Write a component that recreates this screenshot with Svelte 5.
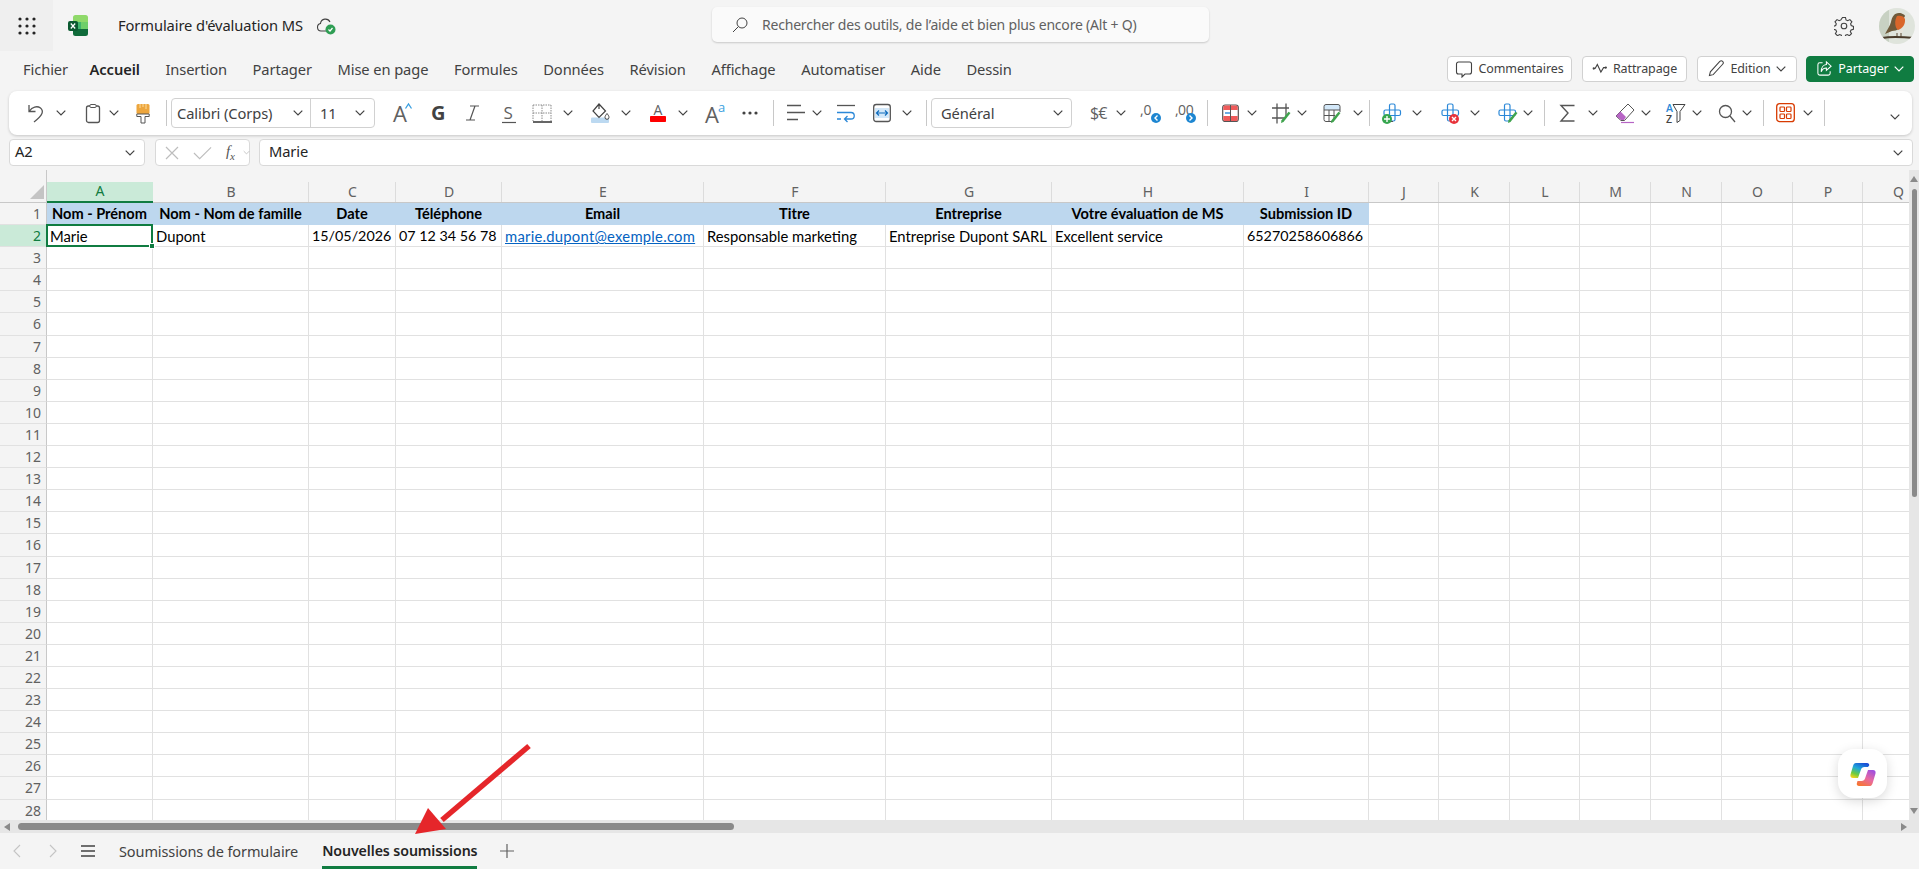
<script>
const tabs = ['Fichier', 'Accueil', 'Insertion', 'Partager', 'Mise en page', 'Formules', 'Données', 'Révision', 'Affichage', 'Automatiser', 'Aide', 'Dessin'];

// [icon, page x, width] : the gap before each item comes from the x of the previous one
const tools = [
	['undo', 28, 16], ['chev', 56, 10], ['clip', 85, 16], ['chev', 109, 10], ['brush', 136, 14], ['sep', 166, 1],
	['font', 171, 204], ['grow', 393, 19], ['bold', 431, 14], ['ital', 465, 15], ['strike', 502, 14], ['border', 532, 20],
	['chev', 563, 10], ['fill', 591, 19], ['chev', 621, 10], ['color', 649, 18], ['chev', 678, 10], ['super', 705, 20],
	['more', 741, 18], ['sep', 773, 1], ['align', 787, 18], ['chev', 812, 10], ['wrap', 837, 18], ['merge', 873, 18],
	['chev', 902, 10], ['sep', 926, 1], ['general', 931, 141], ['money', 1090, 19], ['chev', 1116, 10], ['dec', 1140, 21],
	['inc', 1175, 21], ['sep', 1207, 1], ['cond', 1222, 17], ['chev', 1247, 10], ['hash', 1272, 19], ['chev', 1297, 10],
	['tab', 1323, 18], ['chev', 1353, 10], ['sep', 1369, 1], ['add', 1382, 20], ['chev', 1412, 10], ['del', 1440, 20],
	['chev', 1470, 10], ['fmt', 1498, 19], ['chev', 1523, 10], ['sep', 1544, 1], ['sum', 1560, 15], ['chev', 1588, 10],
	['erase', 1615, 20], ['chev', 1641, 10], ['sort', 1666, 19], ['chev', 1692, 10], ['find', 1718, 17], ['chev', 1742, 10],
	['sep', 1763, 1], ['addin', 1776, 19], ['chev', 1803, 10], ['sep', 1824, 1]
].map((t, i, all) => {
	const prev = i ? all[i - 1][1] + all[i - 1][2] : 9;
	return { icon: t[0], w: t[2], gap: t[1] - prev };
});

const letters = 'ABCDEFGHIJKLMNOPQ'.split('');
const head = ['Nom - Prénom', 'Nom - Nom de famille', 'Date', 'Téléphone', 'Email', 'Titre', 'Entreprise', 'Votre évaluation de MS', 'Submission ID'];
const first = ['Marie', 'Dupont', '15/05/2026', '07 12 34 56 78', 'marie.dupont@exemple.com', 'Responsable marketing', 'Entreprise Dupont SARL', 'Excellent service', '65270258606866'];
const numeric = [2, 3, 8];
const rows = Array.from({ length: 28 }, (_, i) => i + 1);
</script>

{#snippet chevron(color = '#424242')}
	<svg class="chev" viewBox="0 0 10 6" width="10" height="6"><path d="M.7.7 5 5 9.3.7" fill="none" stroke={color} stroke-width="1.2" /></svg>
{/snippet}

{#snippet cross()}
	<path d="M7.5 9V4.500A1.500 1.500 0 0 1 9 3h2.500A1.500 1.500 0 0 1 13 4.500V9h4a1.500 1.500 0 0 1 1.500 1.500V13a1.500 1.500 0 0 1-1.500 1.500h-4v4a1.500 1.500 0 0 1-1.500 1.500H9a1.500 1.500 0 0 1-1.500-1.500v-4h-4A1.500 1.500 0 0 1 2 13v-2.500A1.500 1.500 0 0 1 3.500 9zM7.500 9H13v5.500H7.500z" fill="#fff" stroke="#2b88d8" stroke-width="1.200" />
{/snippet}

{#snippet pencil()}
	<path d="M18.500 12 11.500 21l-2.500 1 .5-2.800 7-8.400z" fill="#3fa34d" />
{/snippet}

{#snippet tool(name, w)}
	<svg viewBox="0 0 {w} 24" width={w} height="24" class="ico">
		{#if name === 'undo'}
			<path d="M1 4v6.500h6.500M1.500 10C4 6 9 4.500 12.500 7c3.500 3 2.500 7-6.500 14" fill="none" stroke="#555" stroke-width="1.300" />
		{:else if name === 'clip'}
			<rect x="1.500" y="5" width="13" height="16.500" rx="2" fill="none" stroke="#555" stroke-width="1.300" />
			<rect x="5" y="3.500" width="6" height="3" rx=".8" fill="#fff" stroke="#555" />
		{:else if name === 'brush'}
			<rect x=".5" y="3" width="13" height="10" rx="1.500" fill="#eda63d" />
			<path d="M4 3v4M7 3v3M10 3v5" stroke="#f8d089" stroke-width="1.300" />
			<path d="M.8 13h12.400v2.500H9V22H5v-6.500H.8z" fill="#fff" stroke="#555" />
		{:else if name === 'grow'}
			<text x="0" y="21" class="t thin" font-size="22">A</text>
			<path d="M12.500 7.500 15.500 3 18.500 7.500" fill="none" stroke="#3a9fe0" stroke-width="1.300" />
		{:else if name === 'bold'}
			<text x="0" y="19" class="t" font-size="20" font-weight="700" fill="#424242">G</text>
		{:else if name === 'ital'}
			<path d="M5 5h9M10 5 5 19M1 19h9" fill="none" stroke="#555" stroke-width="1.200" />
		{:else if name === 'strike'}
			<text x="1.500" y="18" class="t thin" font-size="17">S</text>
			<path d="M0 21.500h14" stroke="#555" stroke-width="1.200" />
		{:else if name === 'border'}
			<path d="M1 4h18M1 12h18M1 4v16M10 4v16M19 4v16" fill="none" stroke="#8a8a8a" stroke-dasharray="1.500 1" />
			<path d="M1 21h19" stroke="#333" stroke-width="1.500" />
		{:else if name === 'fill'}
			<rect x="0" y="16.500" width="18" height="5.500" rx="1" fill="#bcd9f1" />
			<path d="M8 3 2 10l6 6.500 6.500-6.500zM8 3v5" fill="none" stroke="#424242" stroke-width="1.200" />
			<path d="M16 12.500c-1.500 2-2 2.800-2 3.800a2 2 0 0 0 4 0c0-1-.5-1.800-2-3.800z" fill="#fff" stroke="#424242" />
		{:else if name === 'color'}
			<text x="9" y="14" class="t thin" font-size="14" text-anchor="middle">A</text>
			<rect x="1" y="15" width="16" height="6" rx=".8" fill="#f00" />
		{:else if name === 'super'}
			<text x="0" y="22" class="t thin" font-size="22">A</text>
			<text x="13" y="11" class="t" font-size="13" fill="#3a9fe0">a</text>
		{:else if name === 'more'}
			<g fill="#424242"><circle cx="3" cy="12" r="1.600" /><circle cx="9" cy="12" r="1.600" /><circle cx="15" cy="12" r="1.600" /></g>
		{:else if name === 'align'}
			<path d="M0 4.500h14M0 11.500h18M0 18.500h11" stroke="#555" stroke-width="1.300" />
		{:else if name === 'wrap'}
			<path d="M0 4.500h18" stroke="#555" stroke-width="1.300" />
			<path d="M0 11.500h14a3 3 0 0 1 0 6.500H8M10.500 15 7.500 18l3 3M0 18h4" fill="none" stroke="#2b88d8" stroke-width="1.300" />
		{:else if name === 'merge'}
			<rect x=".7" y="3.500" width="16.600" height="17" rx="2.500" fill="#fff" stroke="#555" stroke-width="1.300" />
			<rect x="2" y="7" width="14" height="10" fill="#d3e8f9" />
			<path d="M4 12h10M6 9.500 3.500 12 6 14.500M12 9.500 14.500 12 12 14.500" fill="none" stroke="#0f6cbd" stroke-width="1.200" />
		{:else if name === 'money'}
			<text x="0" y="18" class="t thin" font-size="16" letter-spacing="-1">$€</text>
		{:else if name === 'dec'}
			<text x="0" y="14" class="t thin" font-size="14">,0</text>
			<circle cx="16" cy="17" r="5" fill="#1d86d1" />
			<path d="M17.500 14.500 15 17l2.500 2.500" fill="none" stroke="#fff" stroke-width="1.400" />
		{:else if name === 'inc'}
			<text x="0" y="14" class="t thin" font-size="14" letter-spacing="-.5">,00</text>
			<circle cx="16" cy="17" r="5" fill="#1d86d1" />
			<path d="M14.500 14.500 17 17l-2.500 2.500" fill="none" stroke="#fff" stroke-width="1.400" />
		{:else if name === 'cond'}
			<rect x=".7" y="4" width="15.600" height="16.500" rx="2.500" fill="#fff" stroke="#555" stroke-width="1.200" />
			<path d="M1.300 9V6a1.500 1.500 0 0 1 1.500-1.500h11.400A1.500 1.500 0 0 1 15.700 6v3zM1.300 15v3.500A1.500 1.500 0 0 0 2.800 20h11.400a1.500 1.500 0 0 0 1.500-1.500V15z" fill="#ee5b5b" />
			<path d="M3 12h5" stroke="#2b88d8" stroke-width="1.400" />
			<path d="M8.500 4v16" stroke="#555" />
		{:else if name === 'hash'}
			<path d="M0 7h17M0 17h12M5 2.500v20M14 2.500v13" fill="none" stroke="#555" stroke-width="1.300" />
			{@render pencil()}
		{:else if name === 'tab'}
			<path d="M1 9V5.500A2 2 0 0 1 3 3.500h12a2 2 0 0 1 2 2V9z" fill="#d3e8f9" stroke="#555" />
			<path d="M1 9v9.500a2 2 0 0 0 2 2h7M1 14.500h11M6 9v11.500M11 9v9M17 9v2" fill="none" stroke="#555" />
			<g transform="translate(-1)">{@render pencil()}</g>
		{:else if name === 'add'}
			{@render cross()}
			<path d="M7.500 14.500V19a1.500 1.500 0 0 0 1.500 1.500h2" fill="none" stroke="#555" />
			<circle cx="5" cy="18" r="5" fill="#36a64f" />
			<path d="M5 15v6M2 18h6" stroke="#fff" stroke-width="1.400" />
		{:else if name === 'del'}
			{@render cross()}
			<circle cx="14" cy="18" r="5" fill="#e8333b" />
			<path d="M12 16l4 4M16 16l-4 4" stroke="#fff" stroke-width="1.400" />
		{:else if name === 'fmt'}
			<g transform="translate(-1)">{@render cross()}</g>
			<g transform="translate(1)">{@render pencil()}</g>
		{:else if name === 'sum'}
			<path d="M14.500 4.500H1L8 12 1 20h13.500" fill="none" stroke="#555" stroke-width="1.400" />
		{:else if name === 'erase'}
			<path d="M13 3 19 9 9.500 19.500H6L1 15z" fill="#fff" stroke="#555" />
			<path d="M5.500 10.500 11 16l-2 3H6L1 15z" fill="#b765c5" />
			<path d="M6 21.500h13" stroke="#b765c5" stroke-width="1.200" />
		{:else if name === 'sort'}
			<text x="0" y="11" class="t" font-size="10.500" font-weight="600" fill="#2b88d8">A</text>
			<text x="0" y="22" class="t" font-size="10.500" font-weight="600" fill="#424242">Z</text>
			<path d="M7 3.500h12l-5 7v9l-3 2v-11z" fill="#fff" stroke="#424242" />
		{:else if name === 'find'}
			<circle cx="7.500" cy="10.500" r="6" fill="none" stroke="#555" stroke-width="1.300" />
			<path d="m12 15 5 6" stroke="#555" stroke-width="1.300" />
		{:else if name === 'addin'}
			<rect x=".7" y="2.700" width="17.600" height="18" rx="3" fill="#fff" stroke="#d83b01" stroke-width="1.300" />
			<g fill="none" stroke="#d83b01" stroke-width="1.200"><rect x="4" y="6" width="4.500" height="4.500" rx=".8" /><rect x="10.500" y="6" width="4.500" height="4.500" rx=".8" /><rect x="4" y="13" width="4.500" height="4.500" rx=".8" /><rect x="10.500" y="13" width="4.500" height="4.500" rx=".8" /></g>
		{/if}
	</svg>
{/snippet}

<div class="app">
	<header class="top">
		<button class="apps" aria-label="Applications">
			<svg viewBox="0 0 18 18" width="18" height="18"><g fill="#242424">
				{#each [2, 9, 16] as y}{#each [2, 9, 16] as x}<circle cx={x} cy={y} r="1.600" />{/each}{/each}
			</g></svg>
		</button>
		<svg class="xl" viewBox="0 0 20 21" width="20" height="21">
			<path d="M5 2.500A2.500 2.500 0 0 1 7.500 0H17.500A2.500 2.500 0 0 1 20 2.500V7H5z" fill="#8fd96a" />
			<rect x="5" y="7" width="8" height="7" fill="#3fb56d" />
			<rect x="13" y="7" width="7" height="7" fill="#6fcf6a" />
			<path d="M5 14h15v4.500a2.500 2.500 0 0 1-2.500 2.500h-10A2.500 2.500 0 0 1 5 18.500z" fill="#0f6b3a" />
			<rect x="0" y="6" width="10" height="10" rx="2" fill="#0b5a31" />
			<path d="M2.800 8.500 7.200 13.500M7.200 8.500 2.800 13.500" stroke="#fff" stroke-width="1.200" />
		</svg>
		<span class="title">Formulaire d'évaluation MS</span>
		<svg class="cloud" viewBox="0 0 20 18" width="20" height="18">
			<path d="M11 14H5a3.800 3.800 0 0 1-.5-7.500A5 5 0 0 1 14 5" fill="none" stroke="#424242" stroke-width="1.100" />
			<circle cx="14.500" cy="12.500" r="5" fill="#2f9e54" />
			<path d="m12.500 12.500 1.500 1.500 2.500-3" fill="none" stroke="#fff" stroke-width="1.200" />
		</svg>
		<div class="search">
			<svg viewBox="0 0 16 16" width="16" height="16"><circle cx="10" cy="6" r="5" fill="none" stroke="#424242" /><path d="M6.400 9.600 1 15" stroke="#424242" /></svg>
			<span>Rechercher des outils, de l’aide et bien plus encore (Alt + Q)</span>
		</div>
		<svg class="gear" viewBox="0 0 20 20" width="20" height="20" fill="none" stroke="#424242" stroke-width="1.100">
			<circle cx="10" cy="10" r="2.800" />
			<path d="M8.500 1.500h3l.5 2.400 1.700.8 2.200-1.100 2 2.200-1.300 2 .6 1.700 2.300.9-.1 2.900-2.300.6-.8 1.700 1.200 2.100-2.100 2-2.100-1.200-1.700.7-.7 2.300h-3l-.6-2.300-1.700-.7-2.100 1.200-2.100-2 1.200-2.100-.8-1.700-2.300-.6-.1-2.900 2.300-.9.600-1.700-1.300-2 2-2.200 2.200 1.100 1.700-.8z" />
		</svg>
		<svg class="avatar" viewBox="0 0 36 36" width="36" height="36">
			<defs><clipPath id="round"><circle cx="18" cy="18" r="18" /></clipPath></defs>
			<g clip-path="url(#round)">
				<rect width="36" height="36" fill="#dfe4dc" />
				<rect y="0" width="10" height="36" fill="#b9c4b2" opacity=".6" />
				<path d="M20 5c-5 0-7 4-8 9-1 4-4 8-6 12l7-3c5 0 10-3 11-9 .5-4 2-6 2-6 0-1-3-3-6-3z" fill="#6f5a3a" />
				<path d="M18 8c3-1 7 0 8 3 .5 5-2 9-7 11-3-2-4-9-1-14z" fill="#d9662a" />
				<path d="M19 22c3 2 6-1 6-5l-1 7-5 2z" fill="#e8e4da" />
				<path d="M18 25v4M22 25v4" stroke="#5a4630" />
				<path d="M3 30c10-2 22-1 33 0" stroke="#4a3b2a" stroke-width="2" fill="none" />
			</g>
		</svg>
	</header>

	<nav class="tabs">
		{#each tabs as t}
			<span class="tab" class:on={t === 'Accueil'}>{t}</span>
		{/each}
		<div class="actions">
			<button class="comments">
				<svg viewBox="0 0 18 18" width="18" height="18"><path d="M3.500 2h11A2 2 0 0 1 16.500 4v8a2 2 0 0 1-2 2H10l-3 3v-3H3.500a2 2 0 0 1-2-2V4a2 2 0 0 1 2-2z" fill="none" stroke="#424242" stroke-width="1.100" /></svg>
				Commentaires
			</button>
			<button class="catchup">
				<svg viewBox="0 0 18 12" width="16" height="11"><path d="M2 6h1.500L6 1.500 10 10 13 5h3" fill="none" stroke="#424242" stroke-width="1.200" /><circle cx="2" cy="6" r="1.300" fill="#424242" /><circle cx="15.500" cy="5" r="1.300" fill="#424242" /></svg>
				Rattrapage
			</button>
			<button class="edit">
				<svg viewBox="0 0 18 18" width="17" height="17"><path d="M12.500 1.500a2 2 0 0 1 3 3L5.500 15.500l-4 1 1-4z" fill="none" stroke="#424242" stroke-width="1.100" /></svg>
				Edition
				{@render chevron()}
			</button>
			<button class="share">
				<svg viewBox="0 0 18 18" width="17" height="17"><path d="M7 3H4a2 2 0 0 0-2 2v9a2 2 0 0 0 2 2h9a2 2 0 0 0 2-2v-2M11 2l5 4.500L11 11V8.500C8 8.500 6.500 10 5.500 12.500 5.500 8 8 5 11 4.800z" fill="none" stroke="#fff" stroke-width="1.100" /></svg>
				Partager
				{@render chevron('#fff')}
			</button>
		</div>
	</nav>

	<section class="ribbon">
		{#each tools as t}
			{#if t.icon === 'chev'}
				<span class="slot" style:margin-left="{t.gap}px" style:width="{t.w}px">{@render chevron()}</span>
			{:else if t.icon === 'sep'}
				<span class="sep" style:margin-left="{t.gap}px"></span>
			{:else if t.icon === 'font'}
				<div class="field two" style:margin-left="{t.gap}px" style:width="{t.w}px">
					<div class="fname"><span>Calibri (Corps)</span>{@render chevron()}</div>
					<div class="fsize"><span>11</span>{@render chevron()}</div>
				</div>
			{:else if t.icon === 'general'}
				<div class="field fmtbox" style:margin-left="{t.gap}px" style:width="{t.w}px"><span>Général</span>{@render chevron()}</div>
			{:else}
				<span class="slot" style:margin-left="{t.gap}px" style:width="{t.w}px">{@render tool(t.icon, t.w)}</span>
			{/if}
		{/each}
		<span class="collapse">{@render chevron()}</span>
	</section>

	<section class="formula">
		<div class="box namebox"><span>A2</span>{@render chevron()}</div>
		<div class="box fxbox">
			<svg viewBox="0 0 14 14" width="14" height="14"><path d="M1 1l12 12M13 1 1 13" stroke="#bdbdbd" stroke-width="1.200" /></svg>
			<svg viewBox="0 0 20 14" width="19" height="14"><path d="M1 7l6 6L19 1" fill="none" stroke="#bdbdbd" stroke-width="1.200" /></svg>
			<em class="fx">f<sub>x</sub></em>
			<svg viewBox="0 0 10 6" width="7" height="5"><path d="M1 1l4 4 4-4" fill="none" stroke="#bdbdbd" stroke-width="1.200" /></svg>
		</div>
		<div class="box input"><span>Marie</span>{@render chevron()}</div>
	</section>

	<main class="sheet">
		<div class="grid-wrap">
			<div class="grid">
				<div class="corner"><i></i></div>
				{#each letters as l, i}
					<div class="col" class:sel={i === 0}>{l}</div>
				{/each}
				{#each rows as r}
					<div class="rowh" class:sel={r === 2}>{r}</div>
					{#each letters as _, c}
						{#if r === 1 && c < head.length}
							<div class="cell h">{head[c]}</div>
						{:else if r === 2 && c < first.length}
							<div class="cell" class:cur={c === 0} class:num={numeric.includes(c)}>
								{#if c === 4}<span class="link">{first[c]}</span>{:else}{first[c]}{/if}
							</div>
						{:else}
							<div class="cell"></div>
						{/if}
					{/each}
				{/each}
			</div>
			<div class="vbar">
				<i class="up"></i>
				<b></b>
				<i class="down"></i>
			</div>
		</div>
		<div class="hbar">
			<i class="left"></i>
			<b></b>
			<i class="right"></i>
		</div>
	</main>

	<footer class="sheets">
		<svg class="nav" viewBox="0 0 8 14" width="8" height="14"><path d="M7 1 1 7l6 6" fill="none" stroke="#c4c4c4" stroke-width="1.100" /></svg>
		<svg class="nav next" viewBox="0 0 8 14" width="8" height="14"><path d="M1 1l6 6-6 6" fill="none" stroke="#c4c4c4" stroke-width="1.100" /></svg>
		<svg class="menu" viewBox="0 0 14 12" width="14" height="12"><path d="M0 1h14M0 6h14M0 11h14" stroke="#424242" stroke-width="1.300" /></svg>
		<span class="sheet-tab">Soumissions de formulaire</span>
		<span class="sheet-tab on">Nouvelles soumissions</span>
		<svg class="plus" viewBox="0 0 14 14" width="14" height="14"><path d="M7 0v14M0 7h14" stroke="#616161" stroke-width="1.200" /></svg>
	</footer>

	<div class="copilot">
		<svg viewBox="0 0 26 24" width="26" height="24">
			<defs>
				<linearGradient id="cpa" x1="0.700" y1="0" x2="0.200" y2="1"><stop offset="0" stop-color="#1b4fd6" /><stop offset=".4" stop-color="#1fa8d8" /><stop offset=".75" stop-color="#6ccb3f" /><stop offset="1" stop-color="#f2d21b" /></linearGradient>
				<linearGradient id="cpb" x1="0.800" y1="0" x2="0.200" y2="1"><stop offset="0" stop-color="#a04fe0" /><stop offset=".5" stop-color="#e86aa0" /><stop offset="1" stop-color="#f7762f" /></linearGradient>
			</defs>
			<path d="M6 1h11c1.500 0 2.500 1 2.200 2.500L18 5h-3.500c-2 0-3 1-3.500 2.500L8 16H3c-2 0-3-1.500-2.500-3.500L3 4c.5-2 1.500-3 3-3z" fill="url(#cpa)" />
			<path d="M20 24H9c-1.500 0-2.500-1-2.200-2.500L7.500 19h4c2 0 3-1 3.500-2.500L18 8h5c2 0 3 1.500 2.500 3.500L23 20c-.5 2-1.500 4-3 4z" fill="url(#cpb)" />
		</svg>
	</div>

	<svg class="pointer" viewBox="0 0 130 100" width="130" height="100">
		<path d="M114 6 27 80" stroke="#e5262a" stroke-width="5.500" />
		<path d="M0 94 13 68 31 89z" fill="#e5262a" />
	</svg>
</div>

<style>
:global(body) {
	margin: 0;
	background: #f4f4f4;
}
.app {
	position: relative;
	display: flex;
	flex-direction: column;
	height: 869px;
	overflow: hidden;
	font-family: "Noto Sans", "Open Sans", sans-serif;
	color: #424242;
	font-size: 14.7px;
	letter-spacing: -0.1px;
}
.app :global(svg) {
	display: block;
	flex: none;
}
.app :global(svg.ico) {
	overflow: visible;
}
button {
	font: inherit;
	color: inherit;
}
.t {
	font-family: "Open Sans", sans-serif;
}
.thin {
	font-weight: 400;
	fill: #616161;
}
.top {
	display: flex;
	align-items: center;
	height: 51px;
	flex: none;
}
.apps {
	width: 53px;
	height: 51px;
	border: 0;
	background: #efefef;
	display: grid;
	place-items: center;
	padding: 0;
}
.xl {
	margin-left: 15px;
}
.title {
	margin-left: 30px;
	margin-top: -1px;
	color: #242424;
}
.cloud {
	margin-left: 13px;
}
.search {
	position: absolute;
	left: 712px;
	top: 7px;
	width: 497px;
	height: 35px;
	box-sizing: border-box;
	background: #fafafa;
	border-radius: 5px;
	box-shadow: 0 1px 2px #0000002e;
	display: flex;
	align-items: center;
	padding-left: 20px;
	gap: 14px;
	color: #616161;
	font-size: 14px;
	letter-spacing: -0.2px;
}
.gear {
	margin-left: auto;
}
.avatar {
	margin: 0 4px 0 25px;
}
.tabs {
	display: flex;
	align-items: center;
	height: 35px;
	flex: none;
	padding-left: 23px;
	gap: 25.6px;
}
.tab.on {
	font-weight: 600;
	color: #242424;
	margin-left: -4px;
}
.actions {
	margin-left: auto;
	margin-right: 5px;
	display: flex;
	gap: 10px;
}
.actions button {
	height: 26px;
	box-sizing: border-box;
	background: #fff;
	border: 1px solid #d1d1d1;
	border-radius: 4px;
	display: flex;
	align-items: center;
	justify-content: center;
	gap: 5px;
	padding: 0;
	font-size: 12.5px;
	color: #424242;
	letter-spacing: -0.1px;
}
.comments {
	width: 125px;
}
.catchup {
	width: 105px;
}
.edit {
	width: 100px;
}
.actions .share {
	width: 108px;
	margin-left: -1px;
	background: #107c41;
	border-color: #107c41;
	color: #fff;
}
.ribbon {
	display: flex;
	align-items: center;
	flex: none;
	height: 44px;
	margin: 5px 7px 0 9px;
	background: #fff;
	border-radius: 8px;
	box-shadow: 0 1px 3px #00000030;
}
.slot {
	display: flex;
	align-items: center;
	justify-content: center;
	flex: none;
}
.sep {
	width: 1px;
	height: 26px;
	background: #c8c8c8;
	flex: none;
}
.field {
	height: 30px;
	box-sizing: border-box;
	border: 1px solid #d1d1d1;
	border-radius: 4px;
	display: flex;
	align-items: center;
	flex: none;
	color: #424242;
}
.two .fname {
	width: 139px;
	height: 100%;
	display: flex;
	align-items: center;
	justify-content: space-between;
	padding: 0 7px 0 5px;
	box-sizing: border-box;
	border-right: 1px solid #d1d1d1;
}
.two .fsize {
	flex: 1;
	display: flex;
	align-items: center;
	justify-content: space-between;
	padding: 0 9px 0 9px;
}
.fmtbox {
	justify-content: space-between;
	padding: 0 8px 0 9px;
}
.collapse {
	margin-left: auto;
	margin-right: 12px;
	margin-top: 8px;
}
.formula {
	display: flex;
	flex: none;
	height: 27px;
	margin: 4px 6px 0 9px;
	gap: 9px;
}
.box {
	background: #fff;
	border: 1px solid #d9d9d9;
	border-radius: 4px;
	box-sizing: border-box;
	display: flex;
	align-items: center;
	height: 27px;
}
.box > span {
	margin-top: -4px;
}
.namebox {
	width: 136px;
	justify-content: space-between;
	padding: 0 9px 0 5px;
	color: #242424;
}
.fxbox {
	width: 95px;
	margin-left: 1px;
	padding-left: 9px;
	gap: 14px;
}
.fx {
	font-family: "Liberation Serif", serif;
	font-size: 15px;
	color: #555;
	margin-right: -6px;
}
.fx sub {
	font-size: 11px;
}
.input {
	flex: 1;
	justify-content: space-between;
	padding: 0 9px;
	color: #242424;
}
.sheet {
	flex: 1;
	min-height: 0;
	display: flex;
	flex-direction: column;
	margin-top: 4px;
}
.grid-wrap {
	flex: 1;
	min-height: 0;
	display: flex;
	background: #f4f4f4;
}
.grid {
	flex: 1;
	min-width: 0;
	overflow: hidden;
	display: grid;
	grid-template-columns: 47px 106px 156px 87px 106px 202px 182px 166px 192px 125px 70px 71px 70px 71px 71px 71px 70px 71px;
	grid-template-rows: 33px repeat(28, 22.1px);
	font-family: "Lato", sans-serif;
	font-size: 14.8px;
	letter-spacing: 0;
	color: #000;
	background: #fff;
}
.corner {
	background: #f4f4f4;
	border-right: 1px solid #c8c8c8;
	border-bottom: 1px solid #c8c8c8;
	position: relative;
}
.corner i {
	position: absolute;
	right: 2px;
	bottom: 3px;
	border-style: solid;
	border-width: 0 0 14px 14px;
	border-color: transparent transparent #c4c4c4 transparent;
}
.col {
	background: #f4f4f4;
	border-bottom: 1px solid #c8c8c8;
	display: flex;
	align-items: flex-end;
	justify-content: center;
	height: 33px;
	box-sizing: border-box;
	line-height: 20px;
	font-family: "Noto Sans", sans-serif;
	font-size: 14px;
	color: #616161;
	position: relative;
}
.col:not(.sel)::after {
	content: '';
	position: absolute;
	right: 0;
	top: 12px;
	bottom: 0;
	width: 1px;
	background: #dcdcdc;
}
.col.sel {
	background: linear-gradient(#f4f4f4 12px, #caead8 12px);
	border-bottom: 2px solid #107c41;
	color: #107c41;
}
.rowh {
	background: #f4f4f4;
	border-right: 1px solid #c8c8c8;
	border-bottom: 1px solid #e1e1e1;
	font-family: "Noto Sans", sans-serif;
	font-size: 14px;
	color: #616161;
	text-align: right;
	padding-right: 5px;
	line-height: 22px;
	box-sizing: border-box;
}
.rowh.sel {
	background: #caead8;
	color: #107c41;
}
.cell {
	border-right: 1px solid #e1e1e1;
	border-bottom: 1px solid #e1e1e1;
	box-sizing: border-box;
	padding-left: 3px;
	line-height: 22px;
	white-space: nowrap;
	overflow: visible;
	position: relative;
}
.cell.num {
	font-size: 14.3px;
}
.cell.h {
	background: #bdd7ee;
	border-color: #bdd7ee;
	font-weight: 700;
	font-size: 14.6px;
	text-align: center;
	padding: 0;
}
.cell.cur {
	z-index: 1;
}
.cell.cur::before {
	content: '';
	position: absolute;
	inset: -1px;
	border: 2px solid #107c41;
	box-sizing: border-box;
	pointer-events: none;
}
.cell.cur::after {
	content: '';
	position: absolute;
	right: -3px;
	bottom: -3px;
	width: 6px;
	height: 6px;
	background: #107c41;
	border: 1px solid #fff;
	box-sizing: border-box;
}
.link {
	color: #0563c1;
	text-decoration: underline;
	letter-spacing: 0.25px;
}
.vbar {
	width: 10px;
	flex: none;
	background: #e6e6e6;
	display: flex;
	flex-direction: column;
	align-items: center;
}
.vbar b {
	width: 5px;
	height: 308px;
	margin-top: 7px;
	background: #8a8a8a;
	border-radius: 3px;
}
.up {
	margin-top: 6px;
	border-style: solid;
	border-width: 0 4px 6px;
	border-color: transparent transparent #8a8a8a;
}
.down {
	margin-top: auto;
	margin-bottom: 6px;
	border-style: solid;
	border-width: 6px 4px 0;
	border-color: #8a8a8a transparent transparent;
}
.hbar {
	height: 13px;
	flex: none;
	background: #e6e6e6;
	display: flex;
	align-items: center;
}
.hbar b {
	width: 716px;
	height: 7px;
	margin-left: 8px;
	background: #8a8a8a;
	border-radius: 4px;
}
.left {
	margin-left: 4px;
	border-style: solid;
	border-width: 4px 6px 4px 0;
	border-color: transparent #8a8a8a transparent transparent;
}
.right {
	margin-left: auto;
	margin-right: 12px;
	border-style: solid;
	border-width: 4px 0 4px 6px;
	border-color: transparent transparent transparent #8a8a8a;
}
.sheets {
	height: 36px;
	flex: none;
	display: flex;
	align-items: center;
	color: #424242;
	font-size: 14.5px;
}
.nav {
	margin-left: 13px;
}
.nav.next {
	margin-left: 28px;
}
.menu {
	margin-left: 24px;
}
.sheet-tab {
	margin-left: 24px;
	height: 36px;
	line-height: 36px;
	box-sizing: border-box;
}
.sheet-tab.on {
	font-weight: 600;
	font-size: 14.2px;
	color: #242424;
	border-bottom: 3px solid #107c41;
}
.plus {
	margin-left: 23px;
}
.copilot {
	position: absolute;
	left: 1838px;
	top: 749px;
	width: 49px;
	height: 49px;
	background: #fff;
	border-radius: 16px;
	box-shadow: 0 3px 12px #00000026;
	display: grid;
	place-items: center;
}
.pointer {
	position: absolute;
	left: 415px;
	top: 740px;
}
</style>
